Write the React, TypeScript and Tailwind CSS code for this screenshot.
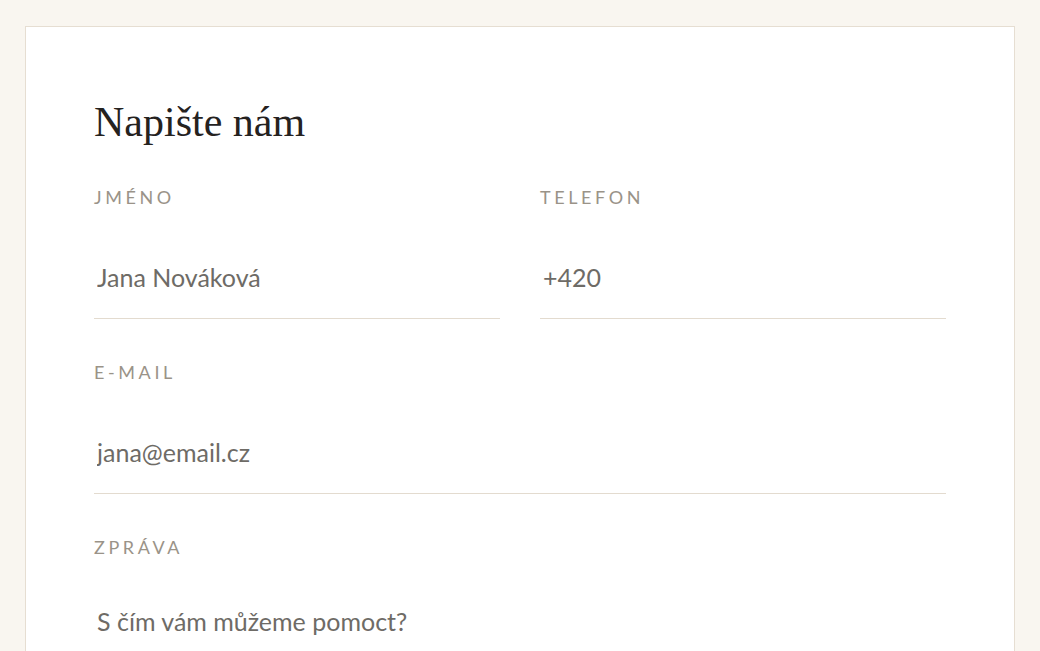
import React from 'react';

const labelCls =
  "block text-[18px] leading-[22px] uppercase tracking-[0.2em] text-[#9a9388] mb-7";
const fieldCls =
  "w-full h-[83px] px-[3px] border-b border-[#e3dbcf] bg-transparent text-[25px] text-[#6e6b66] placeholder:text-[#6e6b66] outline-none";

const Field: React.FC<{ label: string; placeholder: string; type?: string }> = ({ label, placeholder, type = 'text' }) => (
  <label className="block">
    <span className={labelCls}>{label}</span>
    <input type={type} placeholder={placeholder} className={fieldCls} />
  </label>
);

const App: React.FC = () => {
  return (
    <div className="min-h-screen bg-[#f9f6f0] px-[25px] pt-[26px] font-['Lato',sans-serif]">
      <div className="bg-white border border-[#e6ded2] px-[68px] pt-[70px] pb-16">
        <h2 className="font-['Liberation_Serif',serif] text-[42px] leading-[1.2] text-[#25221f] mb-[39px]">
          Napište nám
        </h2>

        <div className="grid grid-cols-2 gap-x-10 gap-y-[42px]">
          <Field label="Jméno" placeholder="Jana Nováková" />
          <Field label="Telefon" placeholder="+420" type="tel" />
          <div className="col-span-2">
            <Field label="E-mail" placeholder="jana@email.cz" type="email" />
          </div>
          <label className="block col-span-2">
            <span className={labelCls}>Zpráva</span>
            <textarea
              rows={5}
              placeholder="S čím vám můžeme pomoct?"
              className="w-full px-[3px] pt-[17px] border-b border-[#e3dbcf] bg-transparent text-[25px] leading-[1.5] text-[#6e6b66] placeholder:text-[#6e6b66] outline-none resize-none"
            />
          </label>
        </div>
      </div>
    </div>
  );
};

export default App;
